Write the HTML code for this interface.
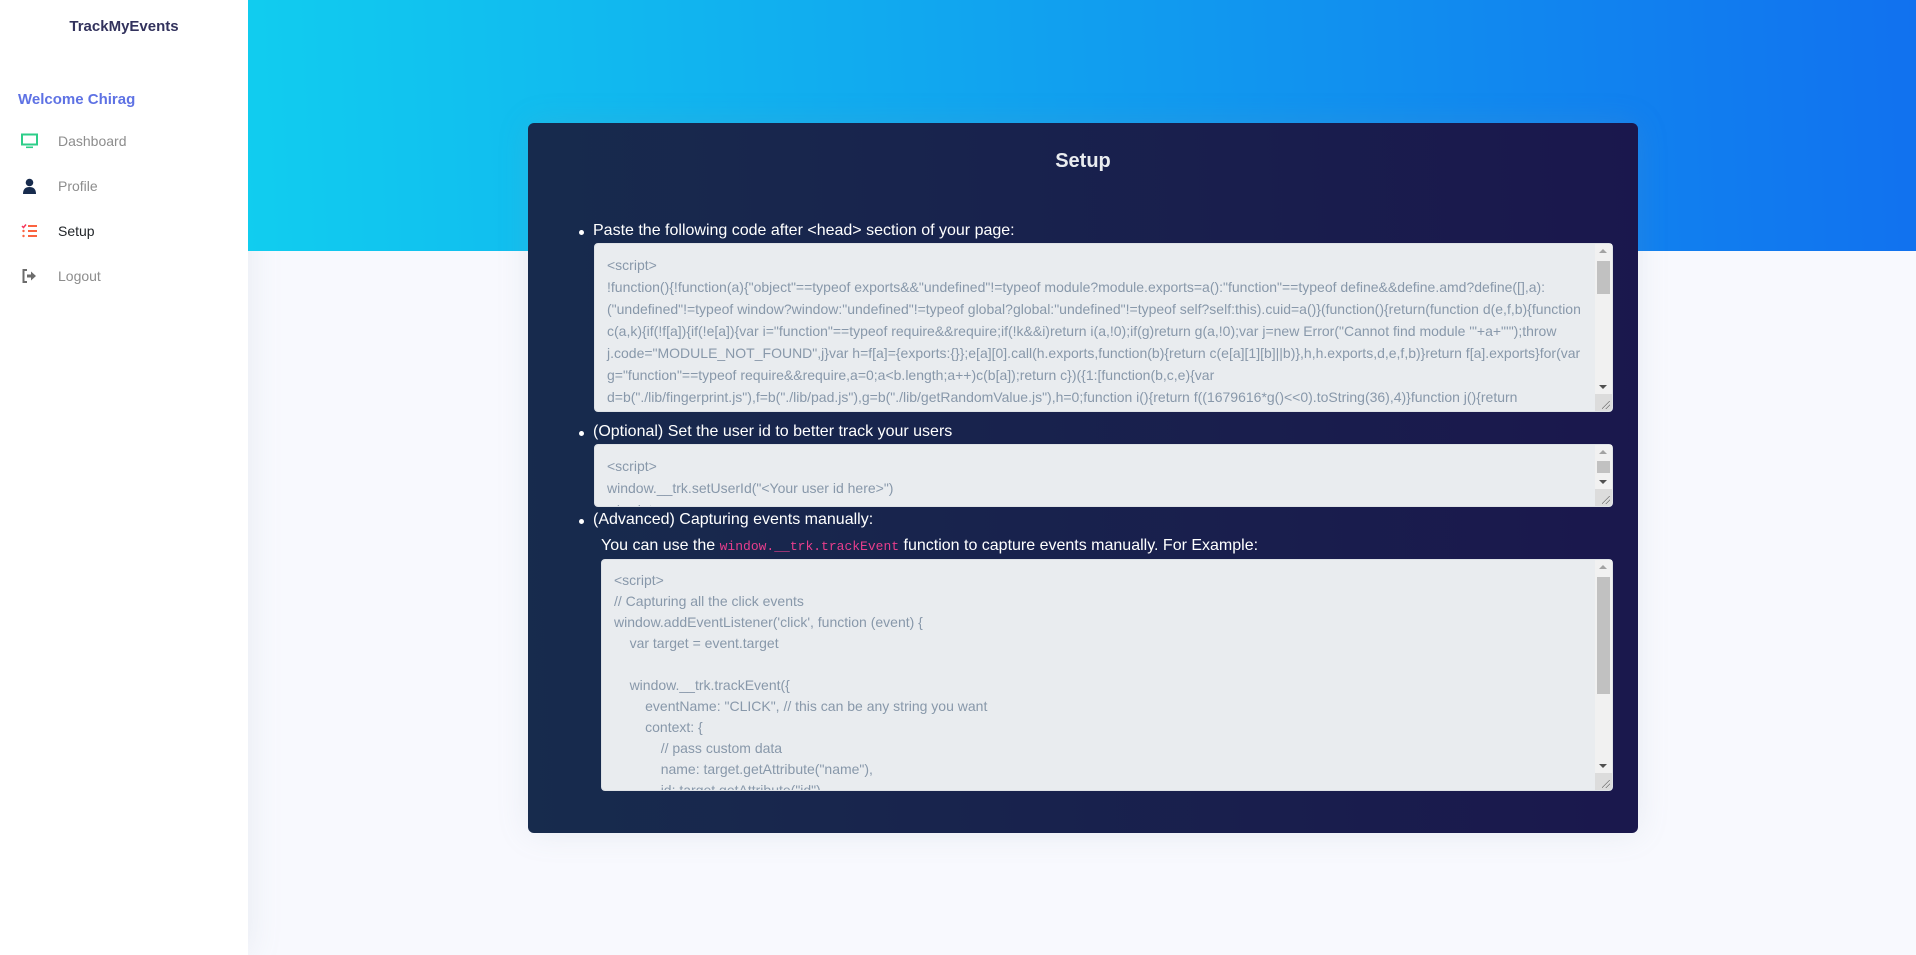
<!DOCTYPE html>
<html><head><meta charset="utf-8"><style>
*{box-sizing:border-box;margin:0;padding:0}
body{width:1916px;height:955px;overflow:hidden;background:#f8f9fe;font-family:"Liberation Sans",Arial,sans-serif;position:relative}
.side{position:absolute;left:0;top:0;width:248px;height:955px;background:#fff;box-shadow:0 0 2rem 0 rgba(136,152,170,.15)}
.logo{position:absolute;top:18px;left:0;width:248px;text-align:center;font-weight:bold;font-size:15px;color:#32325d}
.welcome{position:absolute;top:91px;left:18px;font-weight:bold;font-size:15px;color:#5e72e4}
.nav{position:absolute;left:0;font-size:14px;color:#8d8d8d;height:20px;line-height:20px}
.nav span{position:absolute;left:58px;white-space:nowrap}
.nav svg{position:absolute;left:21px;top:2px}
.hdr{position:absolute;left:248px;top:0;width:1668px;height:251px;background:linear-gradient(87deg,#11cdef 0,#1171ef 100%)}
.card{position:absolute;left:528px;top:123px;width:1110px;height:710px;border-radius:6px;background:linear-gradient(87deg,#172b4d 0,#1a174d 100%);box-shadow:0 0 2rem 0 rgba(136,152,170,.15)}
.title{position:absolute;top:27px;left:0;width:100%;text-align:center;color:#e9ecef;font-weight:bold;font-size:20px}
.b{position:absolute;color:#fff;font-size:16px;white-space:nowrap}
.b:before{content:"";position:absolute;left:-14px;top:8px;width:5px;height:5px;border-radius:50%;background:#fff}
.t{position:absolute;color:#fff;font-size:16px;white-space:nowrap}
code{font-family:"Liberation Mono",monospace;color:#e83e8c;font-size:13px}
textarea{position:absolute;background:#e9ecef;border:1px solid #dee2e6;border-radius:4px;color:#8898aa;font-family:"Liberation Sans",Arial,sans-serif;font-size:14px;line-height:22px;padding:10px 29px 10px 12px;overflow:hidden;resize:none;white-space:pre-wrap}
.sb{position:absolute;width:17px;background:#f1f1f1}
.th{position:absolute;left:2px;width:13px;background:#c1c1c1}
.up,.dn{position:absolute;left:4px;width:0;height:0;border-left:4.5px solid transparent;border-right:4.5px solid transparent}
.up{top:5px;border-bottom:4.5px solid #a3a3a3}
.dn{bottom:5px;border-top:4.5px solid #505050}
.cr{position:absolute;width:17px;height:17px;background:#dcdcdc;border-bottom-right-radius:4px}
.cr:after{content:"";position:absolute;right:2px;bottom:2px;width:8px;height:8px;background:linear-gradient(135deg,transparent 45%,#777 45%,#777 52%,transparent 52%,transparent 70%,#777 70%,#777 77%,transparent 77%)}
</style></head><body>
<div class="side">
<div class="logo">TrackMyEvents</div>
<div class="welcome">Welcome Chirag</div>
<div class="nav" style="top:131px"><svg width="17" height="16" viewBox="0 0 17 16"><rect x="1" y="1.5" width="15" height="10" fill="none" stroke="#2dce89" stroke-width="2"/><rect x="5" y="13.5" width="7" height="1.6" fill="#2dce89"/></svg><span>Dashboard</span></div>
<div class="nav" style="top:176px"><svg width="17" height="16" viewBox="0 0 17 16"><circle cx="8.5" cy="4.5" r="3.8" fill="#172b4d"/><path d="M2 16c0-5 2.5-7 6.5-7s6.5 2 6.5 7z" fill="#172b4d"/></svg><span>Profile</span></div>
<div class="nav" style="top:221px;color:#212529"><svg width="17" height="16" viewBox="0 0 17 16"><path d="M1 3l1.5 1.5L5 1.5" stroke="#f5365c" stroke-width="1.5" fill="none"/><rect x="7" y="2" width="9" height="2" fill="#fb6340"/><circle cx="2.5" cy="8" r="1.2" fill="#fb6340"/><rect x="7" y="7" width="9" height="2" fill="#fb6340"/><circle cx="2.5" cy="13" r="1.2" fill="#fb6340"/><rect x="7" y="12" width="9" height="2" fill="#fb6340"/></svg><span>Setup</span></div>
<div class="nav" style="top:266px"><svg width="17" height="16" viewBox="0 0 17 16"><path d="M6 2H2.5v12H6" stroke="#6c6c6c" stroke-width="2" fill="none"/><path d="M6 6.5h4V3.5l5 4.5-5 4.5V9.5H6z" fill="#6c6c6c"/></svg><span>Logout</span></div>
</div>
<div class="hdr"></div>
<div class="card">
<div class="title">Setup</div>
<div class="b" style="left:65px;top:99px">Paste the following code after &lt;head&gt; section of your page:</div>
<textarea style="left:66px;top:120px;width:1019px;height:169px">&lt;script&gt;
!function(){!function(a){"object"==typeof exports&amp;&amp;"undefined"!=typeof module?module.exports=a():"function"==typeof define&amp;&amp;define.amd?define([],a):("undefined"!=typeof window?window:"undefined"!=typeof global?global:"undefined"!=typeof self?self:this).cuid=a()}(function(){return(function d(e,f,b){function c(a,k){if(!f[a]){if(!e[a]){var i="function"==typeof require&amp;&amp;require;if(!k&amp;&amp;i)return i(a,!0);if(g)return g(a,!0);var j=new Error("Cannot find module '"+a+"'");throw j.code="MODULE_NOT_FOUND",j}var h=f[a]={exports:{}};e[a][0].call(h.exports,function(b){return c(e[a][1][b]||b)},h,h.exports,d,e,f,b)}return f[a].exports}for(var g="function"==typeof require&amp;&amp;require,a=0;a&lt;b.length;a++)c(b[a]);return c})({1:[function(b,c,e){var d=b("./lib/fingerprint.js"),f=b("./lib/pad.js"),g=b("./lib/getRandomValue.js"),h=0;function i(){return f((1679616*g()&lt;&lt;0).toString(36),4)}function j(){return h=h&lt;1679616?h:0,++h-1}function a(){return"c"+(new Date).getTime().toString(36)+f(j().toString(36),4)+d()+(i()+i())}a.slug=function(){var a=(new</textarea>
<div class="sb" style="left:1067px;top:121px;height:150px"><div class="up"></div><div class="th" style="top:17px;height:33px"></div><div class="dn"></div></div>
<div class="cr" style="left:1067px;top:271px"></div>
<div class="b" style="left:65px;top:300px">(Optional) Set the user id to better track your users</div>
<textarea style="left:66px;top:321px;width:1019px;height:63px">&lt;script&gt;
window.__trk.setUserId("&lt;Your user id here&gt;")
&lt;/script&gt;</textarea>
<div class="sb" style="left:1067px;top:322px;height:44px"><div class="up"></div><div class="th" style="top:16px;height:12px"></div><div class="dn"></div></div>
<div class="cr" style="left:1067px;top:366px"></div>
<div class="b" style="left:65px;top:388px">(Advanced) Capturing events manually:</div>
<div class="t" style="left:73px;top:414px">You can use the <code>window.__trk.trackEvent</code> function to capture events manually. For Example:</div>
<textarea style="left:73px;top:436px;width:1012px;height:232px;line-height:21px">&lt;script&gt;
// Capturing all the click events
window.addEventListener('click', function (event) {
    var target = event.target

    window.__trk.trackEvent({
        eventName: "CLICK", // this can be any string you want
        context: {
            // pass custom data
            name: target.getAttribute("name"),
            id: target.getAttribute("id")
        }
    })
})
&lt;/script&gt;</textarea>
<div class="sb" style="left:1067px;top:437px;height:213px"><div class="up"></div><div class="th" style="top:17px;height:117px"></div><div class="dn"></div></div>
<div class="cr" style="left:1067px;top:650px"></div>
</div>
</body></html>
